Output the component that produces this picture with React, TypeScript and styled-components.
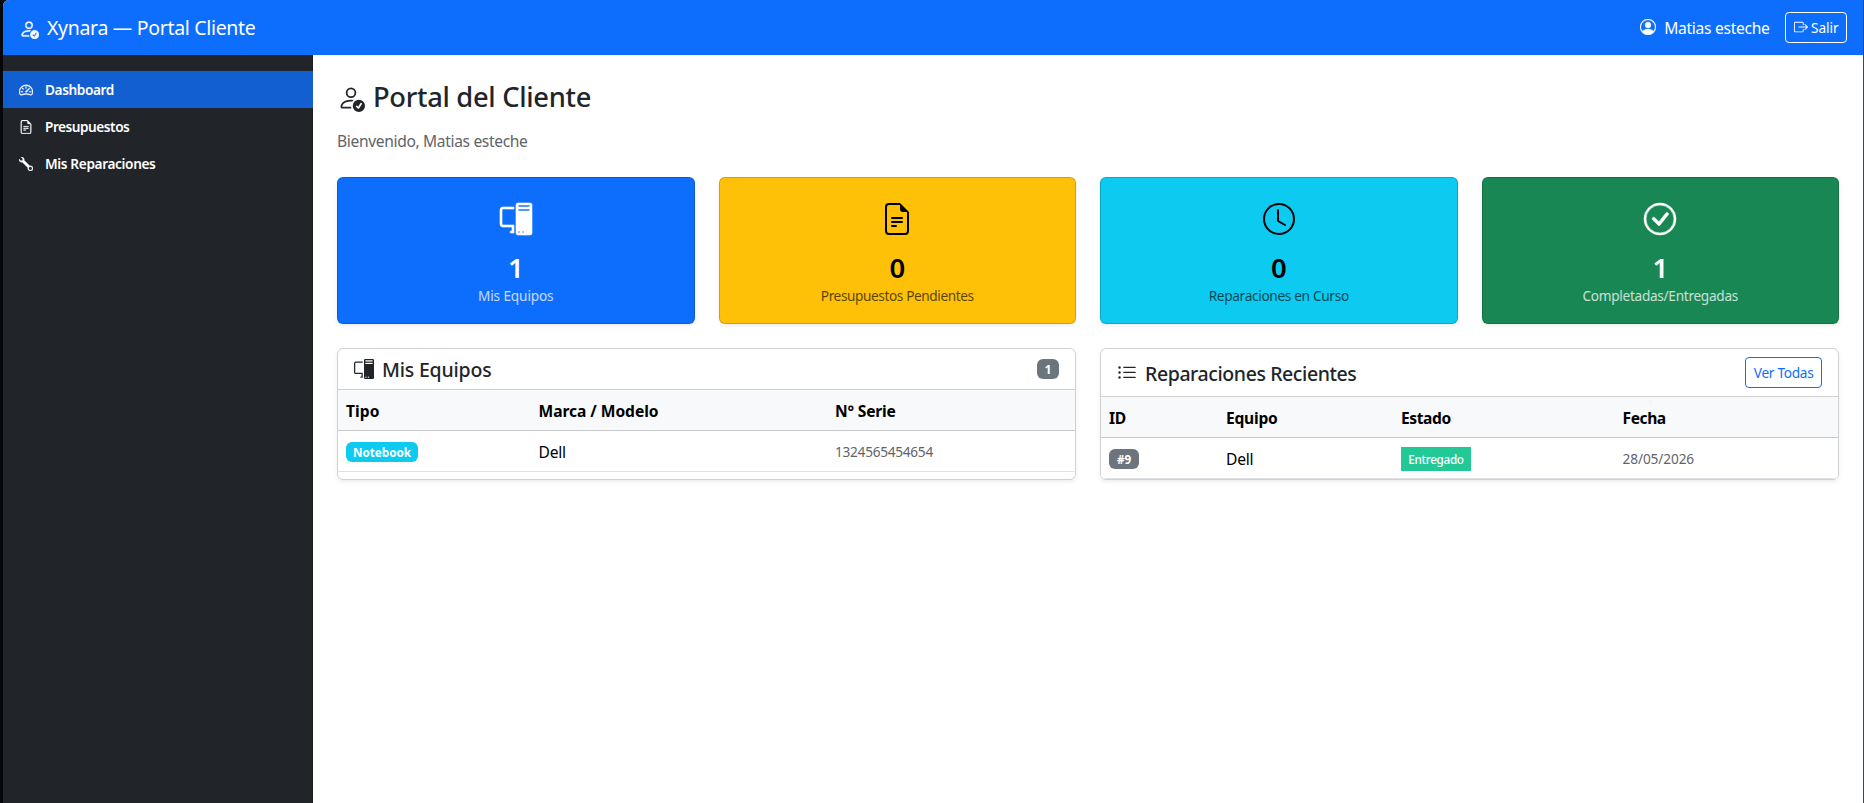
import React from 'react';
import styled, { createGlobalStyle } from 'styled-components';
import {
  BsBoxArrowRight,
  BsCheckCircle,
  BsClock,
  BsFileEarmarkText,
  BsListUl,
  BsPcDisplay,
  BsPersonCheck,
  BsPersonCircle,
  BsSpeedometer2,
  BsWrench,
} from 'react-icons/bs';

const GlobalStyle = createGlobalStyle`
  *, *::before, *::after { box-sizing: border-box; }
  body {
    margin: 0;
    background: #05070b;
    color: #212529;
    font-family: "Noto Sans", "Open Sans", sans-serif;
    font-size: 15.6px;
    line-height: 24px;
  }
  h1, h2, p { margin: 0; }
  svg { display: block; flex: none; }
`;

const Window = styled.div`
  display: flex;
  flex-direction: column;
  height: 803px;
  margin-left: 3px;
  border-right: 1px solid #43464a;
  border-top-left-radius: 6px;
  overflow: hidden;
  background: #fff;
`;

const Navbar = styled.header`
  display: flex;
  align-items: center;
  justify-content: space-between;
  flex: none;
  height: 55px;
  padding: 0 16px;
  background: #0d6efd;
  color: #fff;
`;

const Tracked = styled.span<{ $track?: number }>`
  letter-spacing: ${(p) => p.$track ?? 0}px;
  white-space: nowrap;
`;

const Brand = styled.div`
  display: flex;
  align-items: center;
  gap: 8px;
  font-size: 19.5px;
  line-height: 30px;
  svg { width: 20px; height: 20px; margin-top: 2px; stroke-width: 0.25px; }
`;

const UserArea = styled.div`
  display: flex;
  align-items: center;
  gap: 16px;
`;

const UserName = styled.div`
  display: flex;
  align-items: center;
  gap: 8px;
  svg { width: 16px; height: 16px; margin-top: -1px; stroke-width: 0.25px; }
`;

const OutlineButton = styled.button<{ $color: string }>`
  display: flex;
  align-items: center;
  gap: 3px;
  height: 31px;
  padding: 0 7.5px;
  border: 1px solid ${(p) => p.$color};
  border-radius: 4px;
  background: transparent;
  color: ${(p) => p.$color};
  font-family: inherit;
  font-size: 13.65px;
  line-height: 21px;
  svg { width: 14px; height: 14px; margin-top: -1px; }
`;

const Body = styled.div`
  display: flex;
  flex: 1;
  min-height: 0;
`;

const Sidebar = styled.nav`
  flex: none;
  width: 310px;
  padding-top: 16px;
  border-right: 1px solid #1b1e21;
  background: #212529;
`;

const NavItem = styled.a<{ $active?: boolean }>`
  display: flex;
  align-items: center;
  gap: 12px;
  height: 37px;
  margin-right: -1px;
  padding: 0 16px;
  background: ${(p) => (p.$active ? '#125fd2' : 'transparent')};
  color: #fff;
  font-size: 13.65px;
  font-weight: 600;
  svg { width: 14px; height: 14px; stroke-width: 0.35px; }
`;

const Main = styled.main`
  flex: 1;
  min-width: 0;
  padding: 24px;
`;

const Title = styled.h1`
  display: flex;
  align-items: center;
  gap: 8px;
  height: 34px;
  margin-bottom: 16px;
  padding-top: 1px;
  font-size: 27.3px;
  font-weight: 500;
  line-height: 34px;
  svg { width: 28px; height: 28px; margin-top: 2px; }
`;

const Welcome = styled.p`
  margin-bottom: 24px;
  color: #5f6469;
`;

const StatGrid = styled.section`
  display: grid;
  grid-template-columns: repeat(4, 1fr);
  gap: 24px;
`;

const StatCard = styled.article<{ $bg: string; $light: boolean }>`
  display: flex;
  flex-direction: column;
  align-items: center;
  height: 147px;
  padding-top: 25px;
  border: 1px solid rgba(0, 0, 0, 0.175);
  border-radius: 6px;
  background: ${(p) => p.$bg};
  color: ${(p) => (p.$light ? '#fff' : '#000')};
  box-shadow: 0 2px 4px rgba(0, 0, 0, 0.075);
  > svg {
    width: 32px;
    height: 32px;
    overflow: visible;
    stroke-width: ${(p) => (p.$light ? 0.3 : 0)}px;
  }
`;

const StatValue = styled.strong`
  margin-top: 16px;
  font-size: 27.5px;
  font-weight: 600;
  line-height: 33px;
`;

const StatLabel = styled.span<{ $light: boolean }>`
  margin-top: 1px;
  font-size: 13.65px;
  line-height: 21px;
  opacity: ${(p) => (p.$light ? 0.75 : 0.65)};
`;

const PanelGrid = styled.section`
  display: grid;
  grid-template-columns: 1fr 1fr;
  gap: 24px;
  margin-top: 24px;
`;

const Panel = styled.article`
  height: 132px;
  border: 1px solid #d0d1d2;
  border-radius: 6px;
  box-shadow: 0 2px 4px rgba(0, 0, 0, 0.075);
  overflow: hidden;
`;

const PanelHeader = styled.header`
  display: flex;
  align-items: center;
  justify-content: space-between;
  padding: 8px 16px;
  border-bottom: 1px solid #d0d1d2;
`;

const PanelTitle = styled.h2`
  display: flex;
  align-items: center;
  gap: 8px;
  height: 24px;
  font-size: 19.5px;
  font-weight: 500;
  line-height: 24px;
  svg { width: 20px; height: 20px; }
  span { padding-top: 2px; }
`;

const Badge = styled.span<{ $bg: string; $width: number }>`
  display: flex;
  align-items: center;
  justify-content: center;
  width: ${(p) => p.$width}px;
  height: 20px;
  border-radius: 6px;
  background: ${(p) => p.$bg};
  color: #fff;
  font-size: 11.7px;
  font-weight: 700;
  line-height: 12px;
`;

const StatusTag = styled.span`
  display: flex;
  align-items: center;
  justify-content: center;
  width: 70px;
  height: 24px;
  background: #22c997;
  color: #fff;
  font-size: 11.7px;
  font-weight: 500;
`;

const TableRow = styled.div<{ $cols: string; $head?: boolean }>`
  display: grid;
  grid-template-columns: ${(p) => p.$cols};
  align-items: center;
  height: 41px;
  padding-top: ${(p) => (p.$head ? 1 : 2)}px;
  border-bottom: 1px solid ${(p) => (p.$head ? '#c6c8ca' : '#dee2e6')};
  background: ${(p) => (p.$head ? '#f8f9fa' : '#fff')};
  color: #000;
  font-weight: ${(p) => (p.$head ? 700 : 400)};
`;

const Cell = styled.div<{ $muted?: boolean; $track?: number }>`
  padding: 0 8px;
  letter-spacing: ${(p) => p.$track ?? 0}px;
  white-space: nowrap;
  ${(p) => p.$muted && 'color: #5f6469; font-size: 13.65px;'}
`;

const navItems = [
  { icon: BsSpeedometer2, label: 'Dashboard', track: -0.4, active: true },
  { icon: BsFileEarmarkText, label: 'Presupuestos', track: -0.48 },
  { icon: BsWrench, label: 'Mis Reparaciones', track: -0.36 },
];

const stats = [
  { icon: BsPcDisplay, value: 1, label: 'Mis Equipos', track: -0.14, bg: '#0d6efd', light: true },
  { icon: BsFileEarmarkText, value: 0, label: 'Presupuestos Pendientes', track: -0.4, bg: '#ffc107', light: false },
  { icon: BsClock, value: 0, label: 'Reparaciones en Curso', track: -0.32, bg: '#0dcaf0', light: false },
  { icon: BsCheckCircle, value: 1, label: 'Completadas/Entregadas', track: -0.3, bg: '#198754', light: true },
];

const deviceCols = '192.5px 296.5px 1fr';
const repairCols = '117px 175px 221.5px 1fr';

export default function App() {
  return (
    <>
      <GlobalStyle />
      <Window>
        <Navbar>
          <Brand>
            <BsPersonCheck />
            <Tracked $track={-0.32}>Xynara — Portal Cliente</Tracked>
          </Brand>
          <UserArea>
            <UserName>
              <BsPersonCircle />
              <Tracked $track={-0.3}>Matias esteche</Tracked>
            </UserName>
            <OutlineButton $color="#fff">
              <BsBoxArrowRight />
              <Tracked $track={-0.06}>Salir</Tracked>
            </OutlineButton>
          </UserArea>
        </Navbar>
        <Body>
          <Sidebar>
            {navItems.map(({ icon: Icon, label, track, active }) => (
              <NavItem key={label} $active={active}>
                <Icon />
                <Tracked $track={track}>{label}</Tracked>
              </NavItem>
            ))}
          </Sidebar>
          <Main>
            <Title>
              <BsPersonCheck />
              <Tracked $track={-0.3}>Portal del Cliente</Tracked>
            </Title>
            <Welcome>
              <Tracked $track={-0.35}>Bienvenido, Matias esteche</Tracked>
            </Welcome>
            <StatGrid>
              {stats.map(({ icon: Icon, value, label, track, bg, light }) => (
                <StatCard key={label} $bg={bg} $light={light}>
                  <Icon />
                  <StatValue>{value}</StatValue>
                  <StatLabel $light={light}>
                    <Tracked $track={track}>{label}</Tracked>
                  </StatLabel>
                </StatCard>
              ))}
            </StatGrid>
            <PanelGrid>
              <Panel>
                <PanelHeader>
                  <PanelTitle>
                    <BsPcDisplay />
                    <Tracked $track={-0.2}>Mis Equipos</Tracked>
                  </PanelTitle>
                  <Badge $bg="#6c757d" $width={22}>1</Badge>
                </PanelHeader>
                <TableRow $cols={deviceCols} $head>
                  <Cell $track={0.1}>Tipo</Cell>
                  <Cell $track={-0.05}>Marca / Modelo</Cell>
                  <Cell $track={-0.2}>N° Serie</Cell>
                </TableRow>
                <TableRow $cols={deviceCols}>
                  <Cell>
                    <Badge $bg="#0dcaf0" $width={72}>Notebook</Badge>
                  </Cell>
                  <Cell $track={-0.25}>Dell</Cell>
                  <Cell $muted $track={-0.27}>1324565454654</Cell>
                </TableRow>
              </Panel>
              <Panel>
                <PanelHeader>
                  <PanelTitle>
                    <BsListUl />
                    <Tracked $track={-0.41}>Reparaciones Recientes</Tracked>
                  </PanelTitle>
                  <OutlineButton $color="#0d6efd">
                    <Tracked $track={-0.28}>Ver Todas</Tracked>
                  </OutlineButton>
                </PanelHeader>
                <TableRow $cols={repairCols} $head>
                  <Cell $track={-0.3}>ID</Cell>
                  <Cell $track={-0.25}>Equipo</Cell>
                  <Cell $track={-0.42}>Estado</Cell>
                  <Cell $track={-0.42}>Fecha</Cell>
                </TableRow>
                <TableRow $cols={repairCols}>
                  <Cell>
                    <Badge $bg="#6c757d" $width={30}>#9</Badge>
                  </Cell>
                  <Cell $track={-0.25}>Dell</Cell>
                  <Cell $track={-0.29}>
                    <StatusTag>Entregado</StatusTag>
                  </Cell>
                  <Cell $muted $track={-0.1}>28/05/2026</Cell>
                </TableRow>
              </Panel>
            </PanelGrid>
          </Main>
        </Body>
      </Window>
    </>
  );
}
